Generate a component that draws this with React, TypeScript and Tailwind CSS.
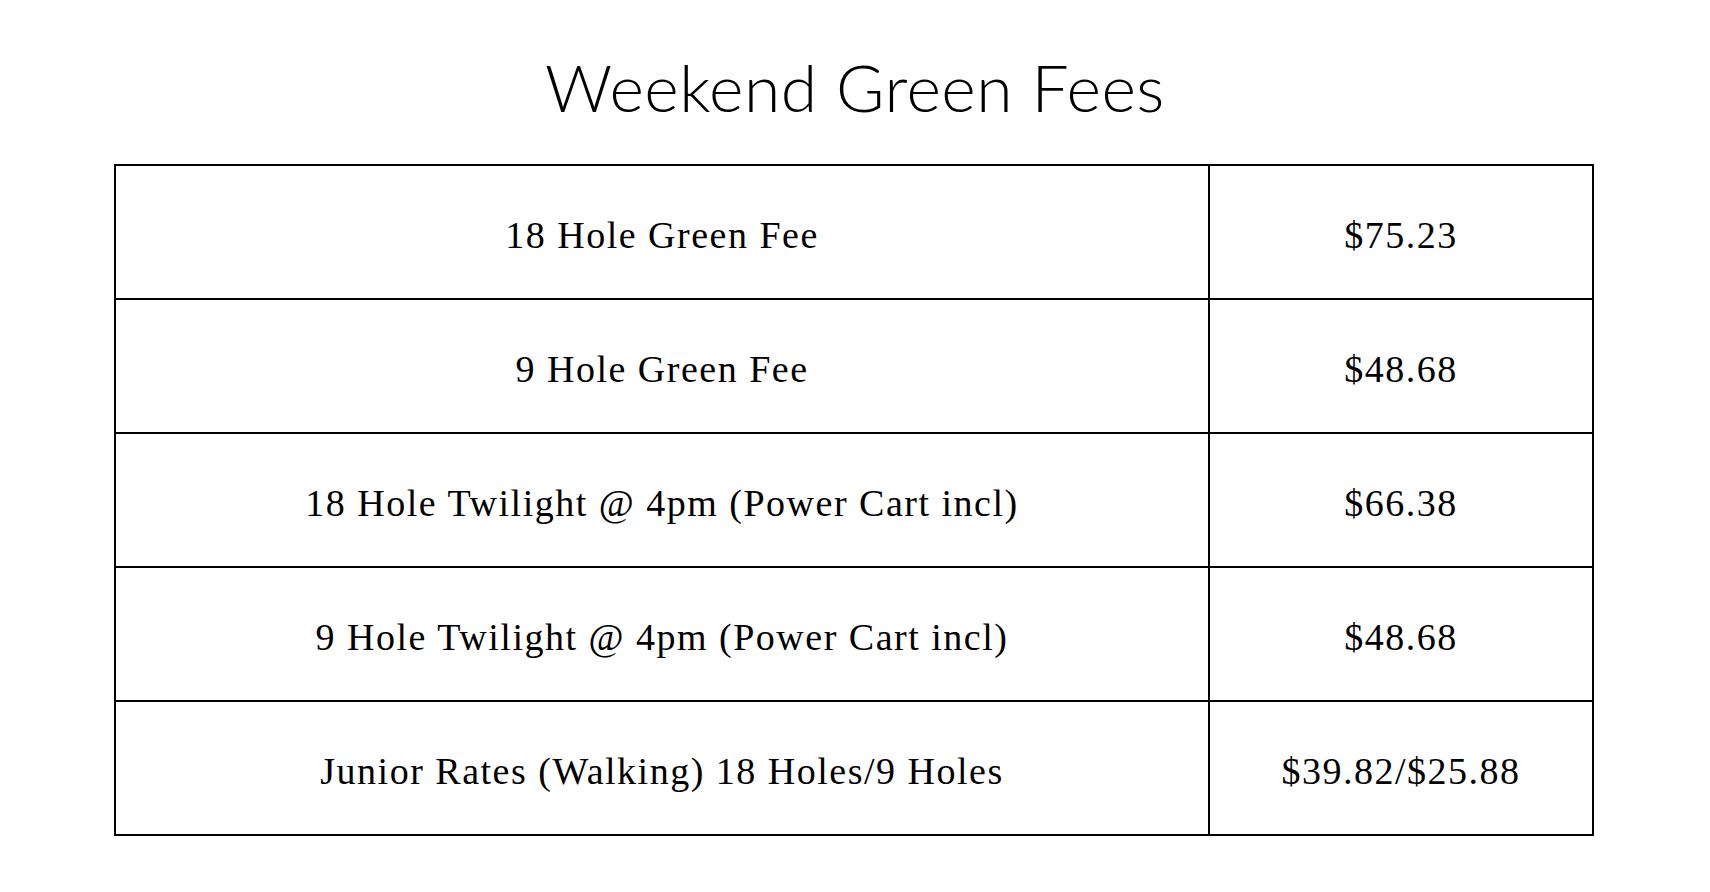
const fees = [
  { label: "18 Hole Green Fee", price: "$75.23" },
  { label: "9 Hole Green Fee", price: "$48.68" },
  { label: "18 Hole Twilight @ 4pm (Power Cart incl)", price: "$66.38" },
  { label: "9 Hole Twilight @ 4pm (Power Cart incl)", price: "$48.68" },
  { label: "Junior Rates (Walking) 18 Holes/9 Holes", price: "$39.82/$25.88" },
];

export default function App() {
  return (
    <div className="min-h-[892px] bg-white px-[114px] pt-[44px] text-black">
      <h1 className="text-center font-['Lato',sans-serif] text-[66px] leading-[86px] font-light tracking-[0.5px]">
        Weekend Green Fees
      </h1>

      <table className="mt-[34px] w-[1480px] border-collapse font-['Liberation_Serif',serif] text-[38px] tracking-[1.5px]">
        <tbody>
          {fees.map((fee) => (
            <tr key={fee.label} className="h-[134px]">
              <td className="w-[1094px] border-2 border-black pt-[6px] text-center align-middle">
                {fee.label}
              </td>
              <td className="border-2 border-black pt-[6px] text-center align-middle">{fee.price}</td>
            </tr>
          ))}
        </tbody>
      </table>
    </div>
  );
}
